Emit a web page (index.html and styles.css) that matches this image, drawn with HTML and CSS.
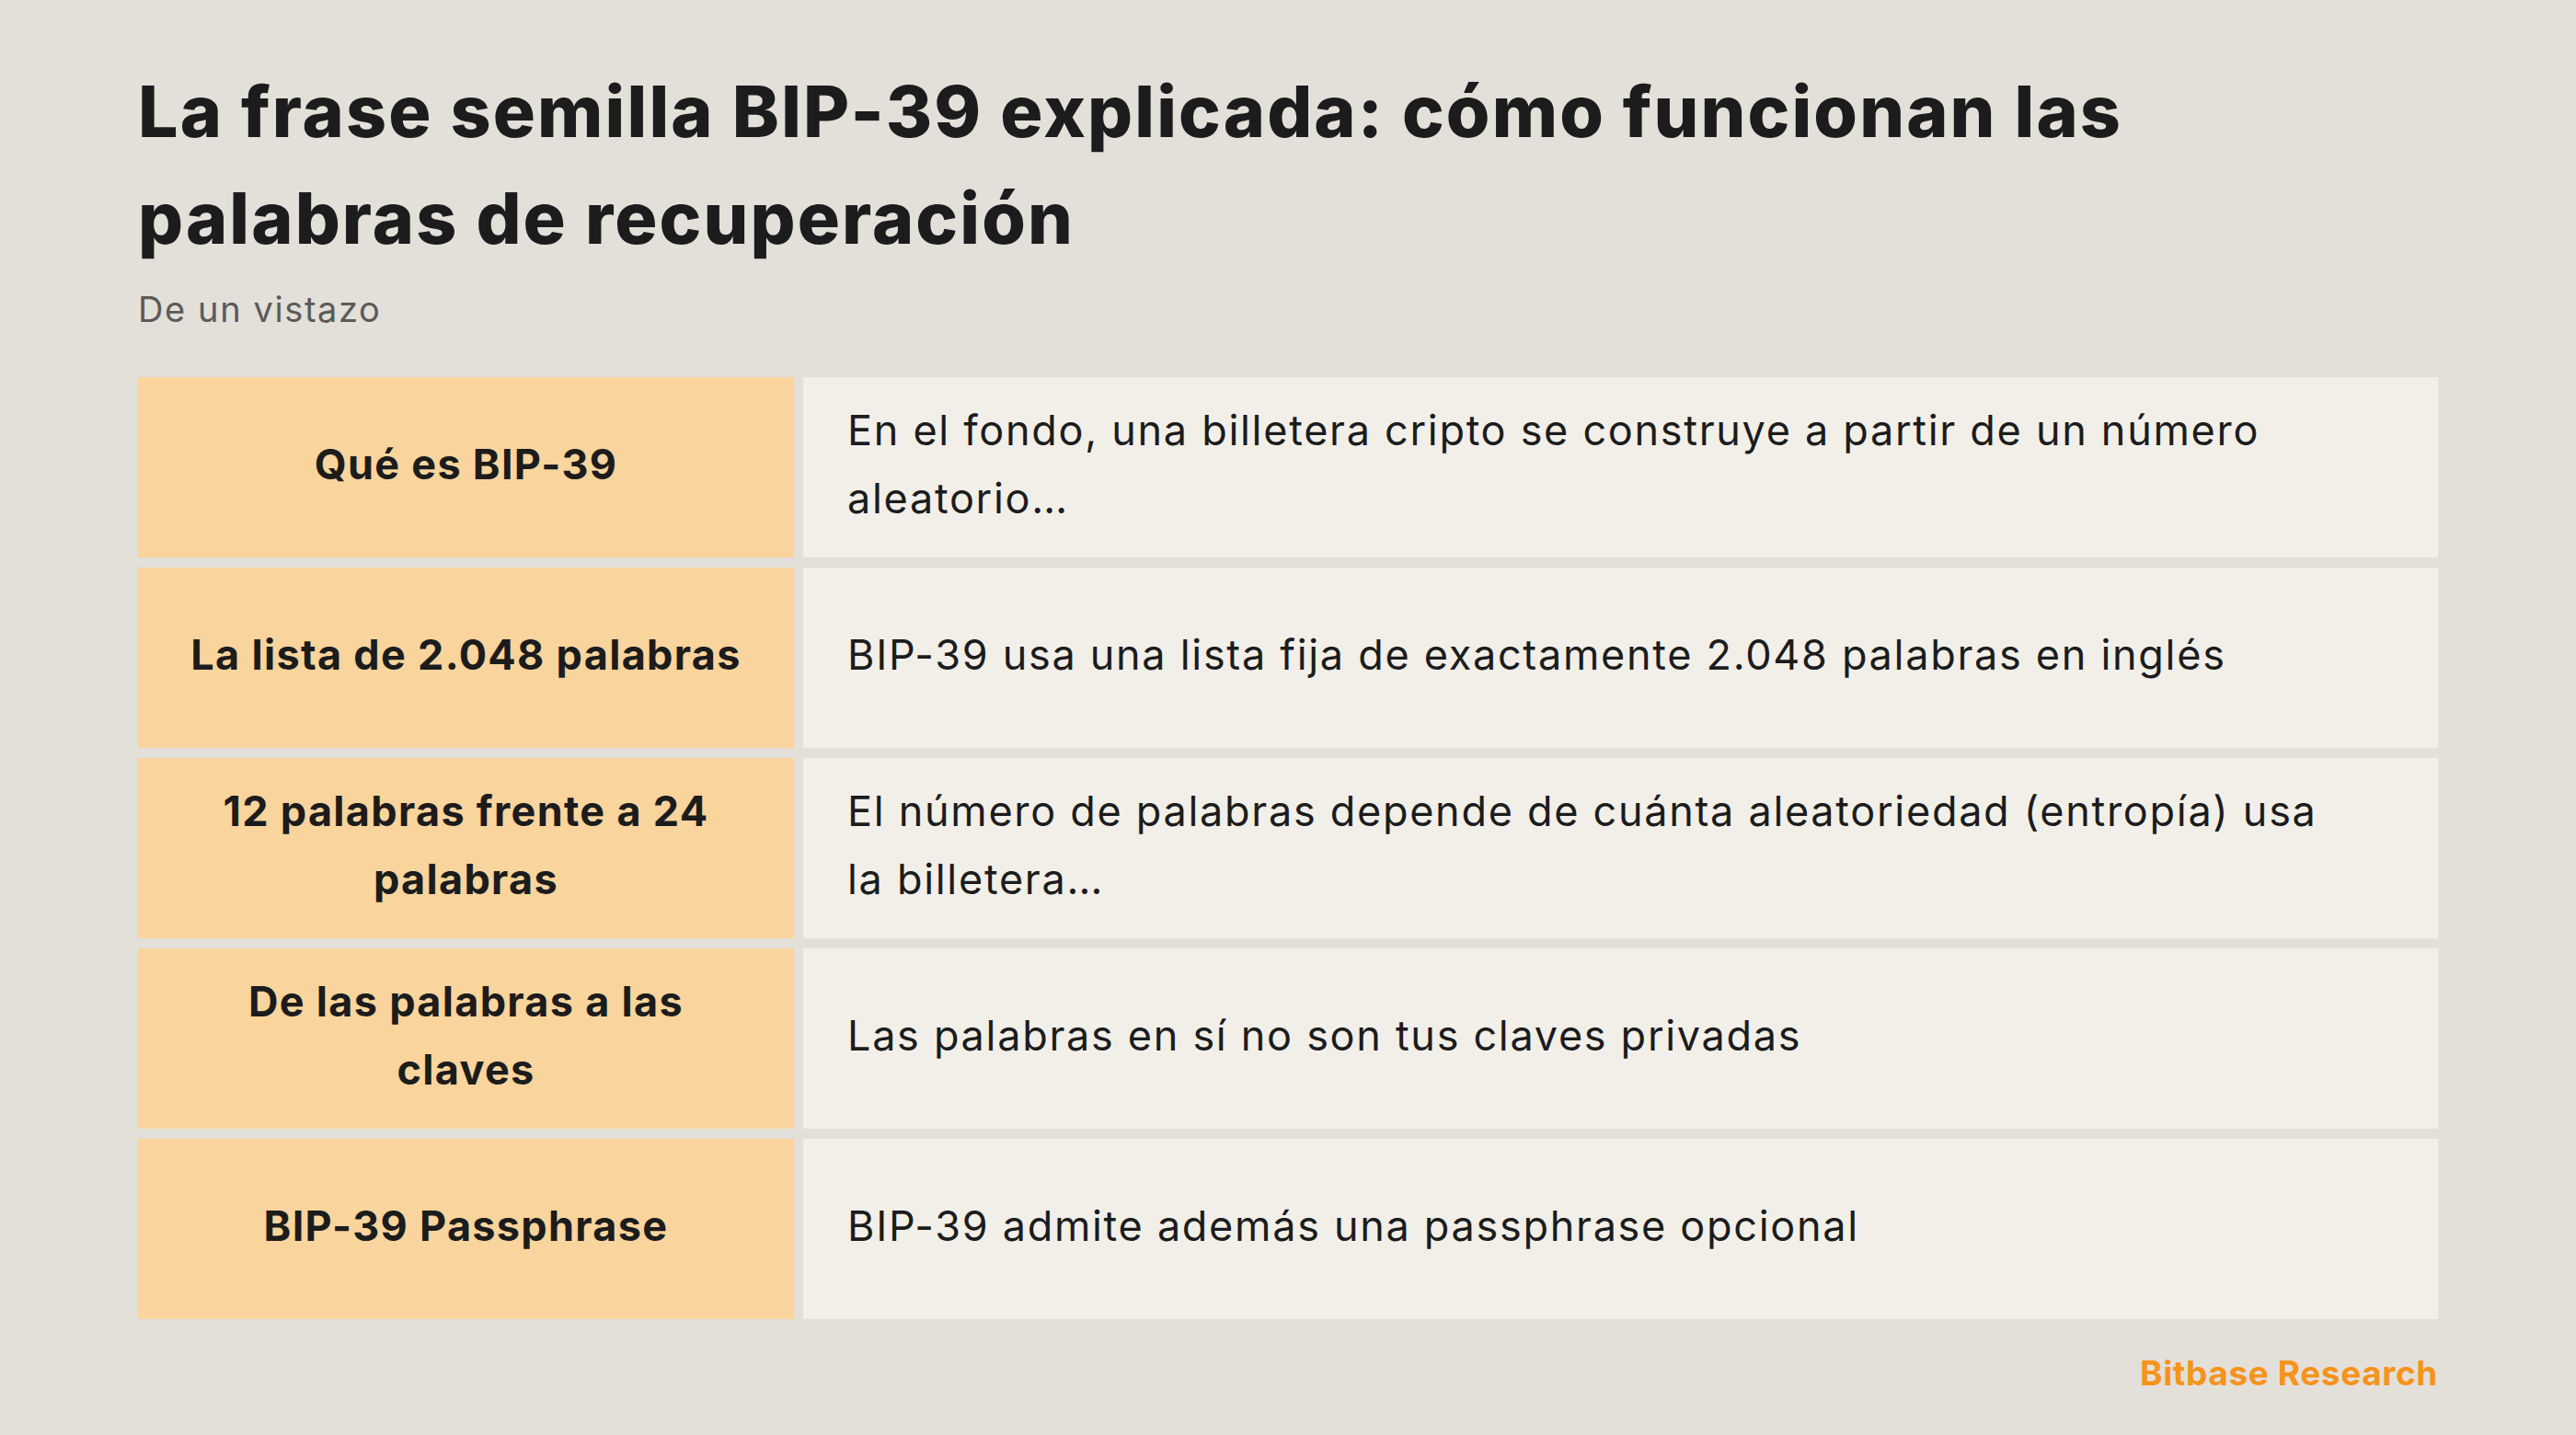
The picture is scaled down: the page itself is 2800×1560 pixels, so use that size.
FILE: index.html
```html
<!DOCTYPE html>
<html lang="es">
<head>
<meta charset="utf-8">
<title>La frase semilla BIP-39 explicada</title>
<link rel="stylesheet" href="styles.css">
</head>
<body>
<main class="slide">
  <header class="head">
    <h1 class="title">La frase semilla BIP-39 explicada: cómo funcionan las palabras de recuperación</h1>
    <p class="subtitle">De un vistazo</p>
  </header>
  <section class="table">
    <div class="key">Qué es BIP-39</div>
    <div class="val">En el fondo, una billetera cripto se construye a partir de un número aleatorio…</div>
    <div class="key">La lista de 2.048 palabras</div>
    <div class="val">BIP-39 usa una lista fija de exactamente 2.048 palabras en inglés</div>
    <div class="key">12 palabras frente a 24 palabras</div>
    <div class="val">El número de palabras depende de cuánta aleatoriedad (entropía) usa la&nbsp;billetera…</div>
    <div class="key">De las palabras a las claves</div>
    <div class="val">Las palabras en sí no son tus claves privadas</div>
    <div class="key">BIP-39 Passphrase</div>
    <div class="val">BIP-39 admite además una passphrase opcional</div>
  </section>
  <footer class="foot">Bitbase Research</footer>
</main>
</body>
</html>
```
FILE: styles.css
```css
* { box-sizing: border-box; }
html, body { margin: 0; padding: 0; }
body {
  background: #e3dfd9;
  color: #1c1c1c;
  font-family: "Inter", "Noto Sans", sans-serif;
}
.slide {
  width: 2800px;
  height: 1560px;
  padding: 63px 150px 0;
  display: flex;
  flex-direction: column;
}
.title {
  margin: 0;
  font-size: 77px;
  line-height: 116px;
  font-weight: 800;
  letter-spacing: 2.1px;
}
.subtitle {
  margin: 15px 0 0;
  font-size: 38px;
  line-height: 52px;
  color: #5c5a57;
  font-weight: 400;
  letter-spacing: 1.6px;
}
.table {
  margin-top: 48px;
  display: grid;
  grid-template-columns: 713px 1fr;
  grid-auto-rows: 196px;
  column-gap: 10px;
  row-gap: 11px;
}
.key, .val {
  display: flex;
  align-items: center;
  padding: 0 48px 6px;
  font-size: 45px;
  line-height: 73.6px;
}
.key {
  background: #f9d49d;
  justify-content: center;
  text-align: center;
  font-weight: 700;
  letter-spacing: 1.3px;
}
.val {
  background: #f2efe9;
  font-weight: 400;
  letter-spacing: 1.7px;
}
.foot {
  margin-top: 34px;
  text-align: right;
  color: #f7931a;
  font-weight: 700;
  font-size: 37px;
  line-height: 50px;
  letter-spacing: 0.6px;
}
```
